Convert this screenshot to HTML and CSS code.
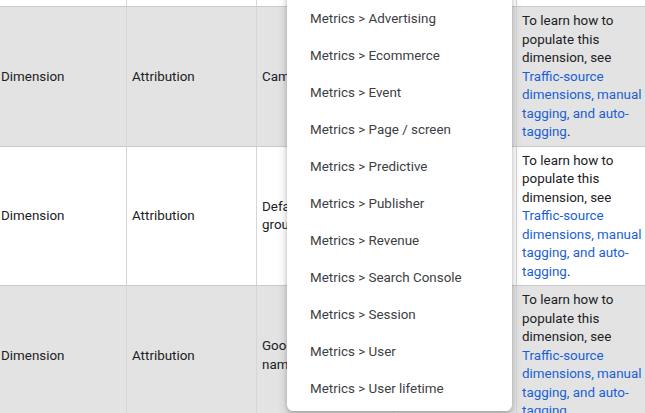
FILE: index.html
```html
<!DOCTYPE html>
<html>
<head>
<meta charset="utf-8">
<link rel="stylesheet" href="styles.css">
</head>
<body>
<div class="viewport">
  <table class="dims">
    <colgroup>
      <col class="c1"><col class="c2"><col class="c3"><col class="c4"><col class="c5">
    </colgroup>
    <tbody>
      <tr class="stub"><td></td><td></td><td></td><td></td><td></td></tr>
      <tr class="shade">
        <td>Dimension</td>
        <td>Attribution</td>
        <td>Campaign</td>
        <td></td>
        <td>To learn how to populate this dimension, see <a href="#">Traffic-source dimensions, manual tagging, and auto-tagging</a>.</td>
      </tr>
      <tr>
        <td>Dimension</td>
        <td>Attribution</td>
        <td>Default channel group</td>
        <td></td>
        <td>To learn how to populate this dimension, see <a href="#">Traffic-source dimensions, manual tagging, and auto-tagging</a>.</td>
      </tr>
      <tr class="shade">
        <td>Dimension</td>
        <td>Attribution</td>
        <td>Google Ads account name</td>
        <td></td>
        <td>To learn how to populate this dimension, see <a href="#">Traffic-source dimensions, manual tagging, and auto-tagging</a>.</td>
      </tr>
    </tbody>
  </table>

  <ul class="menu">
    <li>Metrics &gt; Advertising</li>
    <li>Metrics &gt; Ecommerce</li>
    <li>Metrics &gt; Event</li>
    <li>Metrics &gt; Page / screen</li>
    <li>Metrics &gt; Predictive</li>
    <li>Metrics &gt; Publisher</li>
    <li>Metrics &gt; Revenue</li>
    <li>Metrics &gt; Search Console</li>
    <li>Metrics &gt; Session</li>
    <li>Metrics &gt; User</li>
    <li>Metrics &gt; User lifetime</li>
  </ul>
</div>
</body>
</html>
```

FILE: styles.css
```css
html, body {
  margin: 0;
  padding: 0;
  background: #ffffff;
  overflow: hidden;
}

.viewport {
  position: relative;
  width: 645px;
  height: 413px;
  overflow: hidden;
  font-family: Roboto, "Liberation Sans", Arial, sans-serif;
  font-size: 13.4px;
  color: #202124;
}

.dims {
  border-collapse: collapse;
  table-layout: fixed;
  width: 655px;
  margin-left: -5px;
}

.c1 { width: 131px; }
.c2 { width: 130px; }
.c3 { width: 137px; }
.c4 { width: 123px; }
.c5 { width: 134px; }

.dims td {
  border-left: 1px solid #d6d6d6;
  border-bottom: 1px solid #cbcbcb;
  padding: 5px 6px 4px 5px;
  line-height: 18.5px;
  vertical-align: middle;
}

.dims tr.stub td {
  height: 6px;
  padding: 0;
}

.dims tr.shade td {
  background: #e3e3e3;
}

.dims a {
  color: #1a5fd6;
  text-decoration: none;
}

.menu {
  position: absolute;
  left: 287px;
  top: -9px;
  width: 225px;
  margin: 0;
  padding: 9px 0 4px 0;
  list-style: none;
  background: #ffffff;
  border-radius: 6px;
  box-shadow: 0 2px 4px rgba(0, 0, 0, 0.18), 0 4px 12px rgba(0, 0, 0, 0.16);
}

.menu li {
  height: 37px;
  line-height: 37px;
  padding-left: 23px;
  font-size: 13.4px;
  color: #3c4043;
  white-space: nowrap;
}
```
